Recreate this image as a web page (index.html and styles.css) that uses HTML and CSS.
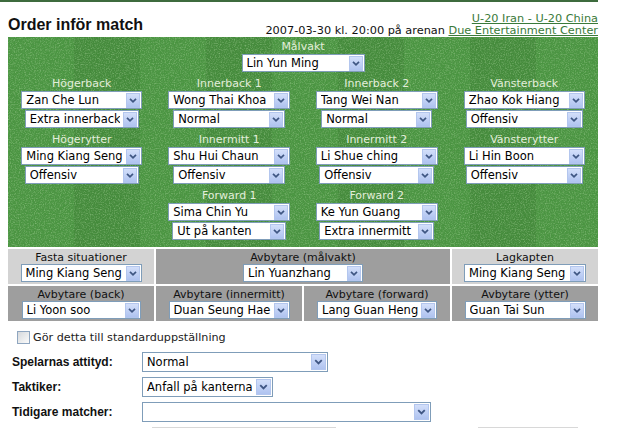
FILE: index.html
```html
<!DOCTYPE html>
<html lang="sv">
<head>
<meta charset="utf-8">
<title>Order inför match</title>
<link rel="stylesheet" href="styles.css">
</head>
<body>
<div class="page">
  <div class="head">
    <h1 class="title">Order inför match</h1>
    <div class="meta">
      <div><a href="#">U-20 Iran - U-20 China</a></div>
      <div>2007-03-30 kl. 20:00 på arenan <a href="#">Due Entertainment Center</a></div>
    </div>
  </div>

  <div class="field">
    <svg class="grain" width="100%" height="100%" aria-hidden="true">
      <filter id="dark" x="0" y="0" width="100%" height="100%"><feTurbulence type="fractalNoise" baseFrequency="0.75" numOctaves="2" seed="3"/><feColorMatrix values="0 0 0 0 0.12  0 0 0 0 0.3  0 0 0 0 0.1  2.2 0 0 0 -1"/></filter>
      <filter id="light" x="0" y="0" width="100%" height="100%"><feTurbulence type="fractalNoise" baseFrequency="0.8" numOctaves="2" seed="9"/><feColorMatrix values="0 0 0 0 0.45  0 0 0 0 0.72  0 0 0 0 0.38  0 2.2 0 0 -1"/></filter>
      <rect width="100%" height="100%" filter="url(#dark)"/>
      <rect width="100%" height="100%" filter="url(#light)"/>
    </svg>

    <div class="gk">
      <div class="pos">
        <div class="lbl">Målvakt</div>
        <span class="sel w123"><select><option>Lin Yun Ming</option></select><i class="arr"><svg viewBox="0 0 14 15"><polyline points="3.5,5.5 7,9 10.5,5.5"/></svg></i></span>
      </div>
    </div>

    <div class="line">
      <div class="pos">
        <div class="lbl">Högerback</div>
        <span class="sel w121"><select><option>Zan Che Lun</option></select><i class="arr"><svg viewBox="0 0 14 15"><polyline points="3.5,5.5 7,9 10.5,5.5"/></svg></i></span>
        <span class="sel sub w114"><select><option>Extra innerback</option></select><i class="arr"><svg viewBox="0 0 14 15"><polyline points="3.5,5.5 7,9 10.5,5.5"/></svg></i></span>
      </div>
      <div class="pos">
        <div class="lbl">Innerback 1</div>
        <span class="sel w122"><select><option>Wong Thai Khoa</option></select><i class="arr"><svg viewBox="0 0 14 15"><polyline points="3.5,5.5 7,9 10.5,5.5"/></svg></i></span>
        <span class="sel sub w112"><select><option>Normal</option></select><i class="arr"><svg viewBox="0 0 14 15"><polyline points="3.5,5.5 7,9 10.5,5.5"/></svg></i></span>
      </div>
      <div class="pos">
        <div class="lbl">Innerback 2</div>
        <span class="sel w122"><select><option>Tang Wei Nan</option></select><i class="arr"><svg viewBox="0 0 14 15"><polyline points="3.5,5.5 7,9 10.5,5.5"/></svg></i></span>
        <span class="sel sub w111"><select><option>Normal</option></select><i class="arr"><svg viewBox="0 0 14 15"><polyline points="3.5,5.5 7,9 10.5,5.5"/></svg></i></span>
      </div>
      <div class="pos">
        <div class="lbl">Vänsterback</div>
        <span class="sel w121"><select><option>Zhao Kok Hiang</option></select><i class="arr"><svg viewBox="0 0 14 15"><polyline points="3.5,5.5 7,9 10.5,5.5"/></svg></i></span>
        <span class="sel sub w117"><select><option>Offensiv</option></select><i class="arr"><svg viewBox="0 0 14 15"><polyline points="3.5,5.5 7,9 10.5,5.5"/></svg></i></span>
      </div>
    </div>

    <div class="line">
      <div class="pos">
        <div class="lbl">Högerytter</div>
        <span class="sel w121"><select><option>Ming Kiang Seng</option></select><i class="arr"><svg viewBox="0 0 14 15"><polyline points="3.5,5.5 7,9 10.5,5.5"/></svg></i></span>
        <span class="sel sub w114"><select><option>Offensiv</option></select><i class="arr"><svg viewBox="0 0 14 15"><polyline points="3.5,5.5 7,9 10.5,5.5"/></svg></i></span>
      </div>
      <div class="pos">
        <div class="lbl">Innermitt 1</div>
        <span class="sel w122"><select><option>Shu Hui Chaun</option></select><i class="arr"><svg viewBox="0 0 14 15"><polyline points="3.5,5.5 7,9 10.5,5.5"/></svg></i></span>
        <span class="sel sub w112"><select><option>Offensiv</option></select><i class="arr"><svg viewBox="0 0 14 15"><polyline points="3.5,5.5 7,9 10.5,5.5"/></svg></i></span>
      </div>
      <div class="pos">
        <div class="lbl">Innermitt 2</div>
        <span class="sel w122"><select><option>Li Shue ching</option></select><i class="arr"><svg viewBox="0 0 14 15"><polyline points="3.5,5.5 7,9 10.5,5.5"/></svg></i></span>
        <span class="sel sub w115"><select><option>Offensiv</option></select><i class="arr"><svg viewBox="0 0 14 15"><polyline points="3.5,5.5 7,9 10.5,5.5"/></svg></i></span>
      </div>
      <div class="pos">
        <div class="lbl">Vänsterytter</div>
        <span class="sel w121"><select><option>Li Hin Boon</option></select><i class="arr"><svg viewBox="0 0 14 15"><polyline points="3.5,5.5 7,9 10.5,5.5"/></svg></i></span>
        <span class="sel sub w117"><select><option>Offensiv</option></select><i class="arr"><svg viewBox="0 0 14 15"><polyline points="3.5,5.5 7,9 10.5,5.5"/></svg></i></span>
      </div>
    </div>

    <div class="line">
      <div></div>
      <div class="pos">
        <div class="lbl">Forward 1</div>
        <span class="sel w122"><select><option>Sima Chin Yu</option></select><i class="arr"><svg viewBox="0 0 14 15"><polyline points="3.5,5.5 7,9 10.5,5.5"/></svg></i></span>
        <span class="sel sub w114"><select><option>Ut på kanten</option></select><i class="arr"><svg viewBox="0 0 14 15"><polyline points="3.5,5.5 7,9 10.5,5.5"/></svg></i></span>
      </div>
      <div class="pos">
        <div class="lbl">Forward 2</div>
        <span class="sel w122"><select><option>Ke Yun Guang</option></select><i class="arr"><svg viewBox="0 0 14 15"><polyline points="3.5,5.5 7,9 10.5,5.5"/></svg></i></span>
        <span class="sel sub w115"><select><option>Extra innermitt</option></select><i class="arr"><svg viewBox="0 0 14 15"><polyline points="3.5,5.5 7,9 10.5,5.5"/></svg></i></span>
      </div>
      <div></div>
    </div>
  </div>

  <div class="subs">
    <div class="cell light">
      <div class="clbl">Fasta situationer</div>
      <span class="sel w121"><select><option>Ming Kiang Seng</option></select><i class="arr"><svg viewBox="0 0 14 15"><polyline points="3.5,5.5 7,9 10.5,5.5"/></svg></i></span>
    </div>
    <div class="cell dark span2">
      <div class="clbl">Avbytare (målvakt)</div>
      <span class="sel w120"><select><option>Lin Yuanzhang</option></select><i class="arr"><svg viewBox="0 0 14 15"><polyline points="3.5,5.5 7,9 10.5,5.5"/></svg></i></span>
    </div>
    <div class="cell light">
      <div class="clbl">Lagkapten</div>
      <span class="sel w122"><select><option>Ming Kiang Seng</option></select><i class="arr"><svg viewBox="0 0 14 15"><polyline points="3.5,5.5 7,9 10.5,5.5"/></svg></i></span>
    </div>
    <div class="cell dark">
      <div class="clbl">Avbytare (back)</div>
      <span class="sel w119"><select><option>Li Yoon soo</option></select><i class="arr"><svg viewBox="0 0 14 15"><polyline points="3.5,5.5 7,9 10.5,5.5"/></svg></i></span>
    </div>
    <div class="cell dark">
      <div class="clbl">Avbytare (innermitt)</div>
      <span class="sel w121"><select><option>Duan Seung Hae</option></select><i class="arr"><svg viewBox="0 0 14 15"><polyline points="3.5,5.5 7,9 10.5,5.5"/></svg></i></span>
    </div>
    <div class="cell dark">
      <div class="clbl">Avbytare (forward)</div>
      <span class="sel w120"><select><option>Lang Guan Heng</option></select><i class="arr"><svg viewBox="0 0 14 15"><polyline points="3.5,5.5 7,9 10.5,5.5"/></svg></i></span>
    </div>
    <div class="cell dark">
      <div class="clbl">Avbytare (ytter)</div>
      <span class="sel w121"><select><option>Guan Tai Sun</option></select><i class="arr"><svg viewBox="0 0 14 15"><polyline points="3.5,5.5 7,9 10.5,5.5"/></svg></i></span>
    </div>
  </div>

  <label class="check"><input type="checkbox"><span>Gör detta till standarduppställning</span></label>

  <div class="form">
    <div class="frow">
      <span class="flbl">Spelarnas attityd:</span>
      <span class="sel big w186"><select><option>Normal</option></select><i class="arr"><svg viewBox="0 0 14 15"><polyline points="3.5,5.5 7,9 10.5,5.5"/></svg></i></span>
    </div>
    <div class="frow">
      <span class="flbl">Taktiker:</span>
      <span class="sel big w131"><select><option>Anfall på kanterna</option></select><i class="arr"><svg viewBox="0 0 14 15"><polyline points="3.5,5.5 7,9 10.5,5.5"/></svg></i></span>
    </div>
    <div class="frow">
      <span class="flbl">Tidigare matcher:</span>
      <span class="sel big w289"><select><option></option></select><i class="arr"><svg viewBox="0 0 14 15"><polyline points="3.5,5.5 7,9 10.5,5.5"/></svg></i></span>
    </div>
  </div>

  <div class="btns"><span class="btn b1"></span><span class="btn b2"></span></div>
</div>
</body>
</html>
```

FILE: styles.css
```css
html, body {
  margin: 0;
  overflow: hidden;
}
body {
  font-family: "DejaVu Sans", Verdana, sans-serif;
  font-size: 11px;
  color: #222;
  background: #fff;
}
.page {
  width: 590px;
  padding-left: 8px;
  border-top: 2px solid #3d6b3d;
}
.head {
  display: flex;
  justify-content: space-between;
  align-items: flex-start;
  padding-top: 11px;
  height: 24px;
}
.title {
  font: bold 16px/18px "Liberation Sans", Arial, sans-serif;
  color: #111;
  margin: 3px 0 0;
}
.meta {
  text-align: right;
  line-height: 12px;
  font-size: 11.3px;
  color: #111;
}
.meta a {
  color: #3a7a3a;
  text-decoration: underline;
}

/* pitch */
.field {
  position: relative;
  padding: 4px 0 7px;
  background: repeating-linear-gradient(90deg, #4a9541 0 66px, #448b3b 66px 132px);
}
.grain {
  position: absolute;
  left: 0;
  top: 0;
  opacity: 0.5;
  pointer-events: none;
}
.gk, .line {
  position: relative;
}
.line {
  display: grid;
  grid-template-columns: repeat(4, 1fr);
  margin-top: 6px;
}
.pos {
  display: flex;
  flex-direction: column;
  align-items: center;
}
.lbl {
  line-height: 12px;
  height: 12px;
  margin-bottom: 1px;
  color: #e3eedb;
}

/* selects */
.sel {
  position: relative;
  display: block;
  height: 18px;
  flex: none;
}
.sel.sub {
  margin-top: 1px;
}
.sel select {
  -webkit-appearance: none;
  appearance: none;
  display: block;
  width: 100%;
  height: 18px;
  margin: 0;
  padding: 0 18px 0 4px;
  box-sizing: border-box;
  border: 1px solid #7f9db9;
  border-radius: 0;
  background: #fff;
  color: #000;
  font: 11.5px "DejaVu Sans", Verdana, sans-serif;
}
.sel .arr {
  position: absolute;
  top: 2px;
  right: 2px;
  width: 14px;
  height: 15px;
  box-sizing: border-box;
  border: 1px solid #b3c6ee;
  background: linear-gradient(#d3dffa, #afc3f0);
  pointer-events: none;
}
.sel .arr svg {
  display: block;
  width: 12px;
  height: 13px;
  fill: none;
  stroke: #3f5683;
  stroke-width: 2;
}
.sel.big {
  height: 20px;
}
.sel.big select {
  height: 20px;
}
.sel.big .arr {
  height: 16px;
  width: 15px;
}
.sel.big .arr svg {
  width: 13px;
  height: 14px;
}
.w111 { width: 111px; }
.w112 { width: 112px; }
.w114 { width: 114px; }
.w115 { width: 115px; }
.w117 { width: 117px; }
.w119 { width: 119px; }
.w120 { width: 120px; }
.w121 { width: 121px; }
.w122 { width: 122px; }
.w123 { width: 123px; }
.w131 { width: 131px; }
.w186 { width: 186px; }
.w289 { width: 289px; }

/* substitutes */
.subs {
  display: grid;
  grid-template-columns: repeat(4, 1fr);
  gap: 2px;
  margin-top: 2px;
}
.cell {
  display: flex;
  flex-direction: column;
  align-items: center;
  padding: 3px 0 2px;
}
.cell.light { background: #d3d3d3; }
.cell.dark { background: #9e9e9e; }
.span2 { grid-column: span 2; }
.clbl {
  line-height: 12px;
  height: 12px;
  color: #111;
}

/* options */
.check {
  display: flex;
  align-items: center;
  margin: 10px 0 0 9px;
  height: 13px;
  color: #222;
  font-size: 11.2px;
}
.check input {
  -webkit-appearance: none;
  appearance: none;
  width: 13px;
  height: 13px;
  margin: 0 3px 0 0;
  box-sizing: border-box;
  border: 1px solid #8fa6c0;
  background: linear-gradient(135deg, #d6d9dc, #fbfbfb);
}
.form {
  display: flex;
  flex-direction: column;
  gap: 5px;
  margin-top: 8px;
}
.frow {
  display: flex;
  align-items: center;
  height: 20px;
}
.flbl {
  width: 130px;
  padding-left: 4px;
  font: bold 12px "Liberation Sans", Arial, sans-serif;
  color: #111;
}
.btns {
  display: flex;
  gap: 142px;
  margin: 5px 0 0 144px;
}
.btn {
  height: 20px;
  border-top: 1px solid #d8d8d8;
}
.b1 { width: 184px; }
.b2 { width: 100px; }
```
